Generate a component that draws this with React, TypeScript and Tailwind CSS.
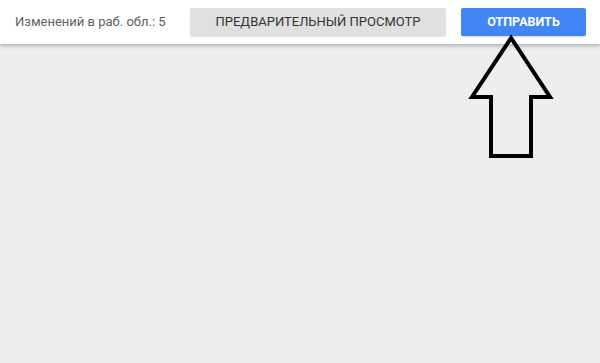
import React from 'react';

// ─── Arrow overlay ──────────────────────────────────────────────────────────

function UpArrow() {
  return (
    <svg
      className="pointer-events-none absolute left-0 top-0"
      width={600}
      height={363}
      viewBox="0 0 600 363"
      aria-hidden="true"
    >
      <polygon
        points="511,38 472,97 491,97 491,156 531,156 531,97 550,97"
        fill="none"
        stroke="#000"
        strokeWidth={4}
        strokeLinejoin="miter"
      />
    </svg>
  );
}

// ─── App ────────────────────────────────────────────────────────────────────

export default function App() {
  return (
    <div
      className="relative h-[363px] w-[600px] overflow-hidden bg-[#eeeeee]"
      style={{ fontFamily: 'Roboto, "Noto Sans", sans-serif' }}
    >
      {/* Top bar */}
      <div className="flex h-[44px] items-center bg-white pl-[15px] pr-[14px] shadow-[0_2px_4px_rgba(0,0,0,0.25)]">
        <span className="text-[13px] text-[#616161]">Изменений в раб. обл.: 5</span>
        <button className="ml-auto h-[28px] w-[256px] rounded-[2px] bg-[#e0e0e0] text-[13px] font-normal uppercase text-[#333333] shadow-[0_1px_1px_rgba(0,0,0,0.12)]">
          Предварительный просмотр
        </button>
        <button className="ml-[15px] h-[28px] w-[125px] rounded-[2px] bg-[#4285f4] text-[12.5px] font-bold uppercase text-white shadow-[0_1px_1px_rgba(0,0,0,0.15)]">
          Отправить
        </button>
      </div>

      <UpArrow />
    </div>
  );
}
